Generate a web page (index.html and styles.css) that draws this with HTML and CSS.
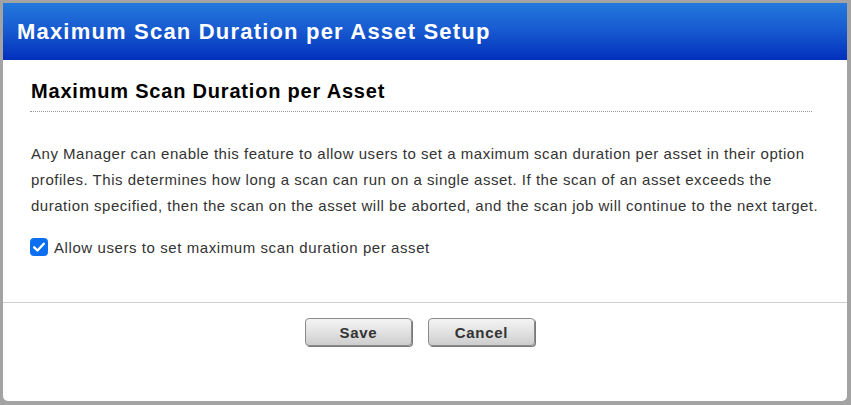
FILE: index.html
```html
<!DOCTYPE html>
<html>
<head>
<meta charset="utf-8">
<link rel="stylesheet" href="styles.css">
</head>
<body>
<div class="dialog">
  <div class="dialog-header">Maximum Scan Duration per Asset Setup</div>
  <div class="dialog-body">
    <h2 class="section-title">Maximum Scan Duration per Asset</h2>
    <p class="desc">Any Manager can enable this feature to allow users to set a maximum scan duration per asset in their option<br>profiles. This determines how long a scan can run on a single asset. If the scan of an asset exceeds the<br>duration specified, then the scan on the asset will be aborted, and the scan job will continue to the next target.</p>
    <label class="check-row">
      <span class="checkbox"><svg viewBox="0 0 18 18" width="18" height="18"><rect x="0.5" y="0.5" width="17" height="17" rx="3" fill="#0b6ff0" stroke="#0b6ff0"/><path d="M4.2 9.3 L7.5 12.5 L13.8 5.8" fill="none" stroke="#fff" stroke-width="2.4" stroke-linecap="round" stroke-linejoin="round"/></svg></span>
      <span>Allow users to set maximum scan duration per asset</span>
    </label>
  </div>
  <div class="dialog-footer">
    <button class="btn">Save</button>
    <button class="btn">Cancel</button>
  </div>
</div>
</body>
</html>
```
FILE: styles.css
```css
html, body {
  margin: 0;
  padding: 0;
  background: #a3a3a3;
  width: 851px;
  height: 405px;
  overflow: hidden;
}
body {
  padding: 3px 4px 4px 3px;
  box-sizing: border-box;
  font-family: "Liberation Sans", Arial, sans-serif;
}
.dialog {
  width: 844px;
  height: 398px;
  background: #fff;
  border-radius: 0 0 5px 5px;
  display: flex;
  flex-direction: column;
  overflow: hidden;
}
.dialog-header {
  height: 57px;
  flex: none;
  box-sizing: border-box;
  background: linear-gradient(to bottom, #2479dd 0%, #1658cf 50%, #0230bd 100%);
  color: #fff;
  font-weight: bold;
  font-size: 22px;
  letter-spacing: 1.19px;
  padding: 16px 0 0 14px;
  width: 845px;
}
.dialog-body {
  padding: 20px 0 0 27px;
  height: 242px;
  box-sizing: border-box;
  flex: none;
}
.section-title {
  margin: 0 35px 0 0;
  font-size: 20px;
  letter-spacing: 0.8px;
  font-weight: bold;
  color: #000;
  padding: 0 0 9px 1px;
  border-bottom: 1px dotted #999;
  line-height: 22px;
}
.desc {
  margin: 29px 0 0 1px;
  font-size: 15px;
  letter-spacing: 0.52px;
  line-height: 26px;
  color: #333;
  white-space: nowrap;
}
.check-row {
  display: flex;
  align-items: center;
  gap: 6px;
  margin-top: 19px;
  font-size: 15px;
  letter-spacing: 0.58px;
  color: #333;
}
.checkbox {
  display: flex;
  width: 18px;
  height: 18px;
}
.dialog-footer {
  border-top: 1px solid #cfcfcf;
  display: flex;
  justify-content: center;
  gap: 16px;
  padding: 15px 10px 0 0;
}
.btn {
  width: 107px;
  height: 28px;
  border: 1px solid #8a8a8a;
  border-radius: 4px;
  background: linear-gradient(to bottom, #f4f4f4 0%, #e2e2e2 50%, #cdcdcd 100%);
  box-shadow: 1px 1px 0 #7a7a7a;
  font-family: "Liberation Sans", Arial, sans-serif;
  font-weight: bold;
  font-size: 15px;
  letter-spacing: 0.7px;
  color: #333;
  padding: 0;
}
```
